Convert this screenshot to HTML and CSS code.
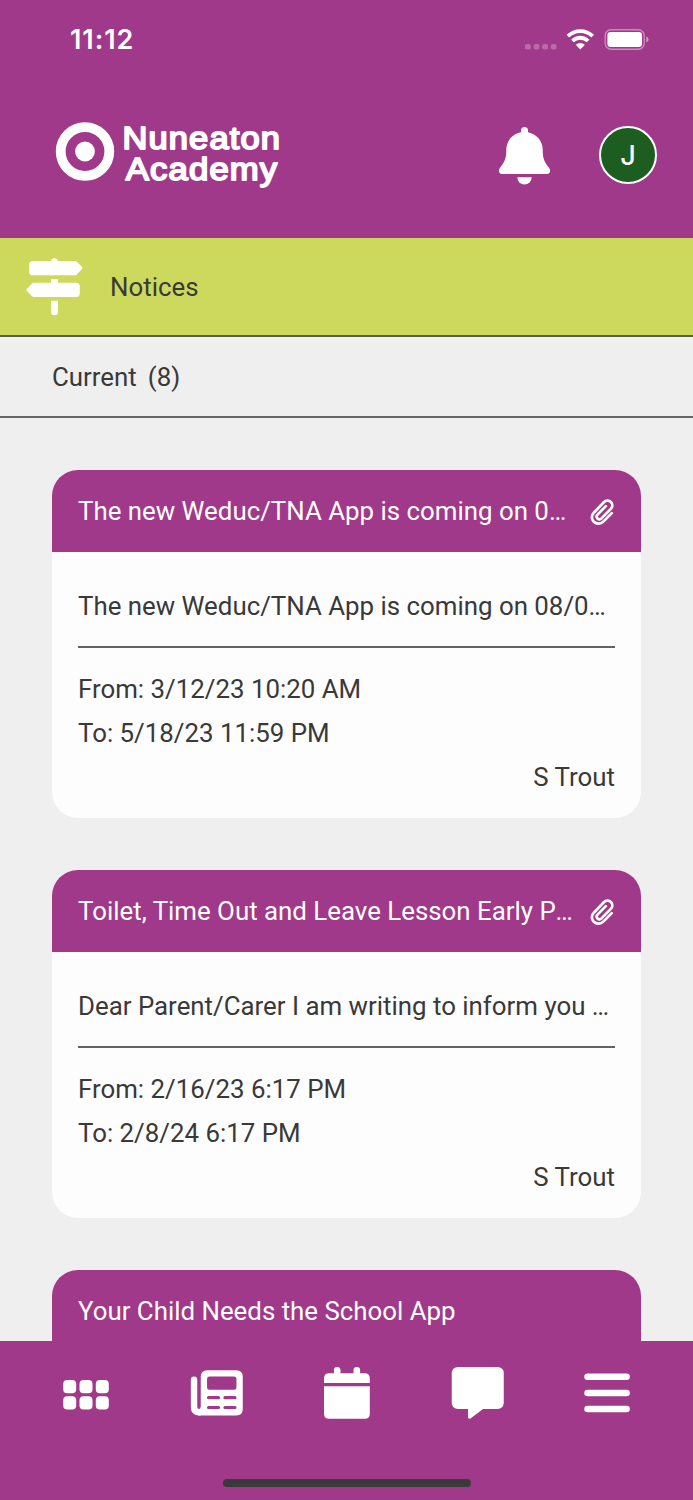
FILE: index.html
```html
<!DOCTYPE html>
<html lang="en">
<head>
<meta charset="utf-8">
<title>Notices</title>
<link rel="stylesheet" href="styles.css">
</head>
<body>
<svg class="defs" width="0" height="0" aria-hidden="true">
  <symbol id="clip" viewBox="0 0 24 27">
    <path d="M21.800 14.100 L13.300 22.600 C10.600 25.300 6.400 25.400 3.800 22.800 C1.200 20.200 1.200 16.300 3.800 13.700 L13.800 3.300 C15.900 1.200 19 1.100 20.900 3 C22.800 4.900 22.700 7.900 20.800 9.900 L11.500 19.400 C10.300 20.600 8.600 20.600 7.500 19.500 C6.400 18.400 6.400 16.800 7.500 15.600 L15.900 7.100" fill="none" stroke="currentColor" stroke-width="2.7" stroke-linecap="round" stroke-linejoin="round"/>
  </symbol>
</svg>
<div class="app">
  <header class="header">
    <div class="status">
      <span class="time">11:12</span>
      <svg class="status-icons" viewBox="524 28 126 24" fill="#fff">
        <g opacity=".25">
          <rect x="525" y="44" width="5.800" height="5.400" rx="1.700"/><rect x="533.600" y="44" width="5.800" height="5.400" rx="1.700"/><rect x="542.200" y="44" width="5.800" height="5.400" rx="1.700"/><rect x="550.800" y="44" width="5.800" height="5.400" rx="1.700"/>
        </g>
        <g fill="none" stroke="#fff">
          <path d="M567.900 36.200 A17.600 17.600 0 0 1 592.700 36.200" stroke-width="3.900"/>
          <path d="M572.500 41 A11 11 0 0 1 588.100 41" stroke-width="3.900"/>
        </g>
        <path d="M575.700 44.700 Q580.300 41.100 584.900 44.700 L580.300 49.400 Z"/>
        <rect x="605.200" y="29.700" width="39" height="19.600" rx="5.800" fill="none" stroke="#fff" stroke-width="1.400" opacity=".42"/>
        <rect x="607.400" y="32" width="34.600" height="15" rx="3.200"/>
        <path d="M646.300 36.500 Q648.600 37.600 648.600 39.500 Q648.600 41.400 646.300 42.500 Z" opacity=".5"/>
      </svg>
    </div>
    <div class="brandbar">
      <svg class="logo" viewBox="50 116 240 78" fill="#fff">
        <circle cx="85" cy="151.500" r="24.300" fill="none" stroke="#fff" stroke-width="9.800"/>
        <circle cx="85" cy="151.500" r="9.900"/>
        <g class="logo-text">
          <text x="122.500" y="148.600" textLength="158.500" lengthAdjust="spacingAndGlyphs">Nuneaton</text>
          <text x="125.800" y="179.600" textLength="152.500" lengthAdjust="spacingAndGlyphs">Academy</text>
        </g>
      </svg>
      <div class="actions">
        <svg class="bell" viewBox="499 126 51 59" fill="#fff">
          <path d="M521 132.300 V130.500 A3.500 3.500 0 0 1 528 130.500 V132.300 C536.500 134 542.700 141 542.700 149.500 C542.700 159 544.500 162 549 167.800 C551.400 171 549.700 174 546.500 174 H502.500 C499.300 174 497.600 171 500 167.800 C504.500 162 506.300 159 506.300 149.500 C506.300 141 512.500 134 521 132.300 Z"/>
          <path d="M517.300 177.300 H531.700 A7.200 7.200 0 0 1 517.300 177.300 Z"/>
        </svg>
        <div class="avatar">J</div>
      </div>
    </div>
  </header>
  <div class="section">
    <svg class="sign" viewBox="26 257.500 57 60" fill="#fff">
      <path d="M51 261.400 A3.600 3.600 0 0 1 58 261.400 H76 L82 267.300 Q83 268.400 82 269.500 L76 275.800 H33 Q29.200 275.800 29.200 272.400 V264.900 Q29.200 261.400 33 261.400 Z"/>
      <path d="M51 279.500 H58 V283.200 H76 Q79.800 283.200 79.800 286.800 V294 Q79.800 297.600 76 297.600 H33 L26.800 291.600 Q25.800 290.500 26.800 289.300 L33 283.200 H51 Z"/>
      <path d="M51 301.200 H58 V312.300 A3.500 3.500 0 0 1 51 312.300 Z"/>
    </svg>
    <span>Notices</span>
  </div>
  <div class="filter">Current<span class="count">(8)</span></div>
  <main class="list">
    <article class="card">
      <div class="card-head"><h2>The new Weduc/TNA App is coming on 08/05/23</h2><svg class="clip"><use href="#clip"/></svg></div>
      <div class="card-body">
        <p class="summary">The new Weduc/TNA App is coming on 08/05/23 to all</p>
        <p>From: 3/12/23 10:20 AM</p>
        <p>To: 5/18/23 11:59 PM</p>
        <p class="author">S Trout</p>
      </div>
    </article>
    <article class="card">
      <div class="card-head"><h2>Toilet, Time Out and Leave Lesson Early Passes</h2><svg class="clip"><use href="#clip"/></svg></div>
      <div class="card-body">
        <p class="summary">Dear Parent/Carer I am writing to inform you regarding</p>
        <p>From: 2/16/23 6:17 PM</p>
        <p>To: 2/8/24 6:17 PM</p>
        <p class="author">S Trout</p>
      </div>
    </article>
    <article class="card">
      <div class="card-head"><h2>Your Child Needs the School App</h2></div>
    </article>
  </main>
  <nav class="nav">
    <div class="tabs">
      <svg viewBox="60 1365 52 56" fill="#fff">
        <rect x="63.200" y="1380" width="13" height="13.200" rx="4"/><rect x="79.500" y="1380" width="13" height="13.200" rx="4"/><rect x="95.800" y="1380" width="13" height="13.200" rx="4"/>
        <rect x="63.200" y="1396.200" width="13" height="13.200" rx="4"/><rect x="79.500" y="1396.200" width="13" height="13.200" rx="4"/><rect x="95.800" y="1396.200" width="13" height="13.200" rx="4"/>
      </svg>
      <svg viewBox="190.250 1365 53 56" class="wide">
        <path d="M194.300 1379.800 V1407 Q194.300 1412.300 199.500 1412.300" fill="none" stroke="#fff" stroke-width="6.400" stroke-linecap="round"/>
        <path fill="#fff" fill-rule="evenodd" d="M207.500 1370.200 H236.500 Q243 1370.200 243 1376.700 V1409 Q243 1415.500 236.500 1415.500 H198.500 V1409.200 Q201 1409 201 1406.500 V1376.700 Q201 1370.200 207.500 1370.200 Z M209.800 1376.500 Q207.300 1376.500 207.300 1379 V1387.300 Q207.300 1389.800 209.800 1389.800 H234.200 Q236.700 1389.800 236.700 1387.300 V1379 Q236.700 1376.500 234.200 1376.500 Z"/>
        <path d="M208.800 1397.700 H218.800 M225.200 1397.700 H235.200 M208.800 1407.500 H218.800 M225.200 1407.500 H235.200" stroke="#a03989" stroke-width="3.200" stroke-linecap="round"/>
      </svg>
      <svg viewBox="320.500 1365 52 56" fill="#fff">
        <path d="M323.500 1383 V1378.500 Q323.500 1373.300 328.700 1373.300 H333.400 V1370.300 A3.300 3.300 0 0 1 340 1370.300 V1373.300 H353 V1370.300 A3.300 3.300 0 0 1 359.600 1370.300 V1373.300 H364.200 Q369.300 1373.300 369.300 1378.500 V1383 Z"/>
        <path d="M323.500 1386.200 H369.300 V1413.700 Q369.300 1418.700 364.300 1418.700 H328.500 Q323.500 1418.700 323.500 1413.700 Z"/>
      </svg>
      <svg viewBox="450.750 1365 53 56" fill="#fff" class="wide">
        <path d="M458 1366.900 H497 Q503.500 1366.900 503.500 1373.400 V1402.500 Q503.500 1409 497 1409 H482.800 L470.300 1418.400 Q467.800 1419.500 467.800 1417 V1409 H458 Q451.500 1409 451.500 1402.500 V1373.400 Q451.500 1366.900 458 1366.900 Z"/>
      </svg>
      <svg viewBox="581 1365 52 56">
        <path d="M587.500 1376.700 H626.600 M587.500 1393 H626.600 M587.500 1409.100 H626.600" stroke="#fff" stroke-width="6.500" stroke-linecap="round"/>
      </svg>
    </div>
    <div class="home-bar"></div>
  </nav>
</div>
</body>
</html>
```
FILE: styles.css
```css
* { box-sizing: border-box; }
body {
  margin: 0;
  background: #efefef;
  color: #393939;
  font: 25.850px/44px Roboto, sans-serif;
}
h2, p { margin: 0; font: inherit; }
svg { display: block; flex: none; }
.defs { position: absolute; }
.app {
  display: flex;
  flex-direction: column;
  height: 1500px;
  overflow: hidden;
}
.header {
  flex: none;
  height: 238px;
  padding: 22px 36px 0 50px;
  background: #a03989;
  color: #fff;
}
.status {
  display: flex;
  justify-content: space-between;
  align-items: center;
  height: 36px;
  padding: 0 7px 0 20px;
}
.time {
  font: 600 27px/36px Inter, sans-serif;
  letter-spacing: 0.9px;
}
.status-icons { width: 126px; height: 24px; }
.brandbar {
  display: flex;
  justify-content: space-between;
  align-items: center;
  height: 78px;
  margin-top: 58px;
}
.logo { width: 240px; height: 78px; }
.logo-text {
  font: 30.500px "Liberation Sans", sans-serif;
  letter-spacing: 1px;
  stroke: #fff;
  stroke-width: 1.800px;
  stroke-linejoin: round;
}
.actions { display: flex; align-items: center; gap: 49px; }
.bell { width: 51px; height: 59px; }
.avatar {
  width: 58px;
  height: 58px;
  border: 2px solid #fff;
  border-radius: 50%;
  background: #1d5e20;
  font: 500 27px/56px Inter, sans-serif;
  text-align: center;
}
.section {
  flex: none;
  display: flex;
  align-items: center;
  gap: 27px;
  height: 99px;
  padding-left: 26px;
  border-bottom: 2px solid #5b5b55;
  background: #cdd95c;
}
.sign { width: 57px; height: 60px; }
.filter {
  flex: none;
  height: 81px;
  padding: 18px 52px 0;
  border-bottom: 2px solid #666;
}
.count { margin-left: 11px; }
.list {
  flex: 1;
  min-height: 0;
  overflow: hidden;
  padding: 52px 52px 0;
}
.card {
  height: 348px;
  margin-bottom: 52px;
  border-radius: 26px;
  overflow: hidden;
  background: #fdfdfd;
}
.card-head {
  display: flex;
  align-items: center;
  justify-content: space-between;
  height: 82px;
  padding: 0 27px 0 26px;
  background: #a03989;
  color: #fff;
}
.card-head h2, .summary {
  white-space: nowrap;
  overflow: hidden;
  text-overflow: ellipsis;
}
.card-head h2 { max-width: 498px; }
.clip { width: 24px; height: 27px; margin-top: 2px; }
.card-body { padding: 32px 26px 0; }
.summary {
  height: 64px;
  margin-bottom: 19px;
  border-bottom: 2px solid #626262;
}
.author { text-align: right; }
.nav {
  flex: none;
  height: 159px;
  padding-top: 24px;
  background: #a03989;
}
.tabs {
  display: flex;
  justify-content: space-between;
  padding: 0 60px;
}
.tabs svg { width: 52px; height: 56px; }
.tabs .wide { width: 53px; margin-right: -1px; }
.home-bar {
  width: 248px;
  height: 8px;
  margin: 58px auto 0;
  border-radius: 4px;
  background: #3a3a3a;
}
```
